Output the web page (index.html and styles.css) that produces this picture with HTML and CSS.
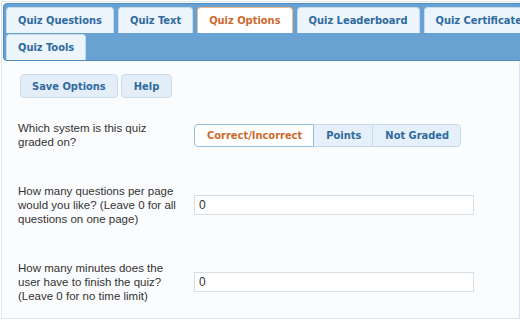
FILE: index.html
```html
<!DOCTYPE html>
<html>
<head>
<meta charset="utf-8">
<link rel="stylesheet" href="styles.css">
</head>
<body>
<div class="panel">
  <div class="tabs-header">
    <ul class="tabs">
      <li class="tab">Quiz Questions</li>
      <li class="tab">Quiz Text</li>
      <li class="tab tab-active">Quiz Options</li>
      <li class="tab">Quiz Leaderboard</li>
      <li class="tab">Quiz Certificate</li>
      <li class="tab">Quiz Tools</li>
    </ul>
  </div>
  <div class="content">
    <div class="actions">
      <button class="btn">Save Options</button>
      <button class="btn">Help</button>
    </div>
    <div class="form">
      <div class="row">
        <div class="label">Which system is this quiz graded on?</div>
        <div class="buttonset">
          <span class="seg seg-active">Correct/Incorrect</span>
          <span class="seg">Points</span>
          <span class="seg">Not Graded</span>
        </div>
      </div>
      <div class="row">
        <div class="label">How many questions per page would you like? (Leave 0 for all questions on one page)</div>
        <div class="field"><input class="input" type="text" value="0"></div>
      </div>
      <div class="row">
        <div class="label">How many minutes does the user have to finish the quiz? (Leave 0 for no time limit)</div>
        <div class="field"><input class="input" type="text" value="0"></div>
      </div>
    </div>
  </div>
</div>
</body>
</html>
```

FILE: styles.css
```css
html, body {
  margin: 0;
  overflow: hidden;
  background: #ffffff;
}
body {
  padding: 1px 0 0 1px;
  width: 520px;
  height: 320px;
  box-sizing: border-box;
}
.panel {
  box-sizing: border-box;
  width: 519px;
  height: 318px;
  border: 1px solid #dce6ee;
  background: #fbfcfd;
  padding: 1px;
}
.tabs-header {
  border: 1px solid #4f8cc4;
  border-radius: 4px;
  background: #67a2d3;
  padding: 3px 2px 0;
  overflow: hidden;
  margin-right: -6px;
}
.tabs {
  list-style: none;
  margin: 0;
  padding: 0;
  width: 570px;
  display: flex;
  flex-wrap: wrap;
  gap: 1px 4px;
}
.tab {
  box-sizing: border-box;
  height: 26px;
  line-height: 24px;
  padding: 1px 11px 0;
  border: 1px solid #c5dbec;
  border-bottom: 0;
  border-radius: 4px 4px 0 0;
  background: #ecf4fc;
  color: #2e6a9e;
  font-family: "DejaVu Sans Condensed", "DejaVu Sans", sans-serif;
  font-stretch: condensed;
  font-weight: bold;
  font-size: 11px;
  white-space: nowrap;
}
.tab-active {
  background: #ffffff;
  border-color: #f1b98c;
  color: #cc6a2c;
}
.content {
  padding: 13px 0 0 15px;
}
.actions {
  display: flex;
  gap: 3px;
  margin-left: 2px;
}
.btn {
  box-sizing: border-box;
  height: 24px;
  padding: 0 11px;
  border: 1px solid #c9dcee;
  border-radius: 4px;
  background: #e4eef9;
  color: #2e6a9e;
  font-family: "DejaVu Sans Condensed", "DejaVu Sans", sans-serif;
  font-stretch: condensed;
  font-weight: bold;
  font-size: 11px;
}
.btn + .btn {
  padding: 0 12px;
}
.form {
  margin-top: 23px;
  display: flex;
  flex-direction: column;
  gap: 35px;
}
.row {
  display: grid;
  grid-template-columns: 163px 1fr;
  column-gap: 13px;
  align-items: center;
}
.label {
  font-family: "Liberation Sans", Arial, sans-serif;
  font-size: 11.5px;
  line-height: 14px;
  color: #333333;
}
.buttonset {
  display: flex;
}
.seg {
  box-sizing: border-box;
  height: 23px;
  line-height: 21px;
  padding: 0 11px 0 12px;
  border: 1px solid #c5dbec;
  background: #e6f0fa;
  color: #2e6a9e;
  font-family: "DejaVu Sans Condensed", "DejaVu Sans", sans-serif;
  font-stretch: condensed;
  font-weight: bold;
  font-size: 11px;
  margin-left: -1px;
}
.seg:first-child {
  margin-left: 0;
  border-radius: 4px 0 0 4px;
}
.seg:last-child {
  border-radius: 0 4px 4px 0;
}
.seg-active {
  background: #ffffff;
  border-color: #8fc0e8;
  color: #cc6a2c;
  position: relative;
}
.field {
  display: flex;
}
.input {
  box-sizing: border-box;
  width: 280px;
  height: 20px;
  margin: 0;
  padding: 0 4px;
  border: 1px solid #d6dee6;
  background: #ffffff;
  font-family: "Liberation Sans", Arial, sans-serif;
  font-size: 12px;
  color: #333333;
  outline: none;
}
```
